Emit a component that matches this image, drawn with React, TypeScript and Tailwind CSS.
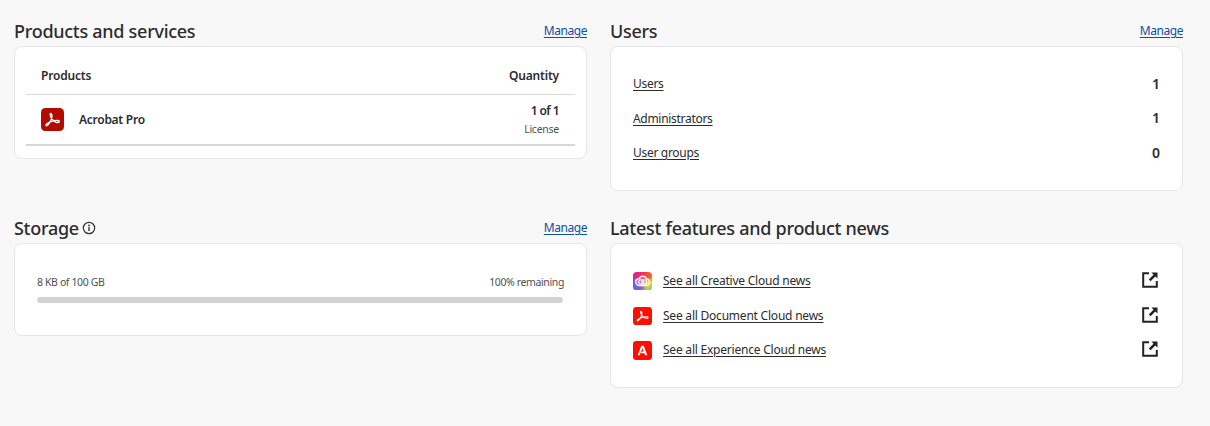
import { ReactNode } from "react";

const font = "font-['Noto_Sans',sans-serif]";

const AcrobatIcon = ({ className }: { className?: string }) => (
	<svg viewBox="0 0 24 24" preserveAspectRatio="none" className={className}>
		<rect width="24" height="24" rx="4.5" fill="currentColor" />
		<path
			d="M5.2 18.2c1.2 1.2 3.4-1.6 5.4-6.2.7-1.700 1-4.900.1-6-.7-.7-1.400.1-1.100 1.500.6 3 3.700 6.600 6.300 7.400 1.700.5 3.200.1 3.200-.9s-2.200-1.300-5-.8c-3.700.6-9.300 3.200-8.900 5z"
			fill="none"
			stroke="#fff"
			strokeWidth="1.400"
			strokeLinejoin="round"
		/>
	</svg>
);

const CreativeCloudIcon = () => (
	<svg viewBox="0 0 20 20" preserveAspectRatio="none" className="h-[18px] w-[19px] shrink-0">
		<defs>
			<linearGradient id="ccBase" x1="0" y1="0" x2="1" y2="0">
				<stop offset="0" stopColor="#f0148c" />
				<stop offset="0.55" stopColor="#f0345a" />
				<stop offset="1" stopColor="#fa6a1e" />
			</linearGradient>
			<radialGradient id="ccBlue" cx="0" cy="1" r="0.8">
				<stop offset="0" stopColor="#2f7bf5" />
				<stop offset="0.6" stopColor="#7a5cf0" stopOpacity="0.8" />
				<stop offset="1" stopColor="#7a5cf0" stopOpacity="0" />
			</radialGradient>
			<radialGradient id="ccGreen" cx="1" cy="1" r="0.75">
				<stop offset="0" stopColor="#5fd46a" />
				<stop offset="0.55" stopColor="#f7dc2e" />
				<stop offset="1" stopColor="#f7dc2e" stopOpacity="0" />
			</radialGradient>
			<clipPath id="ccClip">
				<rect width="20" height="20" rx="4" />
			</clipPath>
		</defs>
		<g clipPath="url(#ccClip)">
			<rect width="20" height="20" fill="url(#ccBase)" />
			<rect width="20" height="20" fill="url(#ccGreen)" />
			<rect width="20" height="20" fill="url(#ccBlue)" />
		</g>
		<path
			d="M6.800 15c-2.200 0-4-1.700-4-3.900s1.700-3.800 3.800-3.800c.6-1.700 2-2.600 3.700-2.600 2 0 3.500 1.200 3.900 2.900 1.900 0 3.200 1.500 3.200 3.500s-1.500 3.900-3.400 3.900H6.800z"
			fill="#fff"
			fillOpacity="0.25"
			stroke="#fff"
			strokeWidth="1.400"
		/>
		<circle cx="8.500" cy="11" r="2.500" fill="none" stroke="#fff" strokeWidth="1.100" />
		<circle cx="11.800" cy="11" r="2.500" fill="none" stroke="#fff" strokeWidth="1.100" />
	</svg>
);

const AdobeIcon = () => (
	<svg viewBox="0 0 20 20" preserveAspectRatio="none" className="h-[19px] w-[19px] shrink-0">
		<rect width="20" height="20" rx="3.500" fill="#fa0f00" />
		<path d="M8.600 5 5 15h2l3-7.500L11.300 11H9.200l-.9 2H12l.8 2H15L11.400 5z" fill="#fff" />
	</svg>
);

const ExternalIcon = () => (
	<svg viewBox="0 0 16 16" className="mb-[2px] h-4 w-4 shrink-0 text-[#222]">
		<path d="M7 1.200H1.200v13.600h13.600V9" fill="none" stroke="currentColor" strokeWidth="2" />
		<path d="M9.500 .5h6v6L13.300 4.400 8.600 9.200 6.800 7.400 11.500 2.700z" fill="currentColor" />
	</svg>
);

const InfoIcon = () => (
	<svg viewBox="0 0 14 14" className="h-3.5 w-3.5 text-[#333]">
		<circle cx="7" cy="7" r="5.700" fill="none" stroke="currentColor" strokeWidth="1.200" />
		<rect x="6.300" y="6.100" width="1.400" height="3.900" fill="currentColor" />
		<circle cx="7" cy="4.400" r="0.900" fill="currentColor" />
	</svg>
);

const Section = ({
	title,
	manage,
	cardClass,
	children,
	extra,
}: {
	title: string;
	manage?: boolean;
	cardClass: string;
	children: ReactNode;
	extra?: ReactNode;
}) => (
	<section>
		<div className="mb-px flex h-[28px] items-center justify-between">
			<h2 className="flex items-center gap-[3.500px] text-[18px] font-medium leading-none tracking-[-0.28px] text-[#2c2c2c]">
				{title}
				{extra}
			</h2>
			{manage && (
				<a className="text-[12px] leading-none tracking-[-0.45px] text-[#0d4fa3] underline underline-offset-2">
					Manage
				</a>
			)}
		</div>
		<div className={`rounded-[8px] border border-[#e6e6e6] bg-white ${cardClass}`}>{children}</div>
	</section>
);

const UserRow = ({ label, count }: { label: string; count: number }) => (
	<div className="flex h-[34.500px] items-center justify-between">
		<a className="text-[12px] tracking-[-0.3px] text-[#2c2c2c] underline underline-offset-2">{label}</a>
		<span className="mb-[2px] text-[14px] font-semibold text-[#2c2c2c]">{count}</span>
	</div>
);

const NewsRow = ({ icon, label }: { icon: ReactNode; label: string }) => (
	<div className="flex h-[34.500px] items-center">
		{icon}
		<a className="ml-[11px] text-[12px] tracking-[-0.22px] text-[#2c2c2c] underline underline-offset-2">
			{label}
		</a>
		<span className="ml-auto mr-[2px] flex">
			<ExternalIcon />
		</span>
	</div>
);

export default function App() {
	return (
		<div className={`${font} h-[426px] bg-[#f8f8f8] pl-[14px] pr-[27px] pt-[17px]`}>
			<div className="grid grid-cols-[573px_573px] gap-x-[23px] gap-y-[23px]">
				<Section title="Products and services" manage cardClass="h-[113px] px-[11px]">
					<div className="flex h-[48px] items-center justify-between border-b border-[#dadada] pl-[15px] pr-[16px] pt-[10px] text-[12px] font-semibold tracking-[-0.2px] text-[#2c2c2c]">
						<span>Products</span>
						<span>Quantity</span>
					</div>
					<div className="flex h-[51px] items-center justify-between border-b-2 border-[#d6d6d6] pl-[15px] pr-[16px]">
						<div className="flex items-center gap-[15px]">
							<AcrobatIcon className="h-[23px] w-[23px] text-[#b30b00]" />
							<span className="text-[12px] font-semibold tracking-[-0.27px] text-[#2c2c2c]">Acrobat Pro</span>
						</div>
						<div className="flex flex-col items-end">
							<span className="text-[12px] font-semibold leading-[20px] tracking-[-0.6px] text-[#2c2c2c]">1 of 1</span>
							<span className="text-[10.500px] leading-[17px] tracking-[-0.25px] text-[#505050]">License</span>
						</div>
					</div>
				</Section>

				<Section title="Users" manage cardClass="h-[145px] px-[22px] pt-[20px]">
					<UserRow label="Users" count={1} />
					<UserRow label="Administrators" count={1} />
					<UserRow label="User groups" count={0} />
				</Section>

				<Section title="Storage" manage cardClass="h-[93px] px-[22px] pt-[31px]" extra={<InfoIcon />}>
					<div className="flex justify-between text-[10.500px] leading-[14px] tracking-[-0.38px] text-[#505050]">
						<span>8 KB of 100 GB</span>
						<span>100% remaining</span>
					</div>
					<div className="mr-px mt-[8px] h-[6px] rounded-full bg-[#d3d3d3]" />
				</Section>

				<Section title="Latest features and product news" cardClass="h-[145px] px-[22px] pt-[20px]">
					<NewsRow icon={<CreativeCloudIcon />} label="See all Creative Cloud news" />
					<NewsRow
						icon={<AcrobatIcon className="h-[18px] w-[19px] shrink-0 text-[#fa0f00]" />}
						label="See all Document Cloud news"
					/>
					<NewsRow icon={<AdobeIcon />} label="See all Experience Cloud news" />
				</Section>
			</div>
		</div>
	);
}
